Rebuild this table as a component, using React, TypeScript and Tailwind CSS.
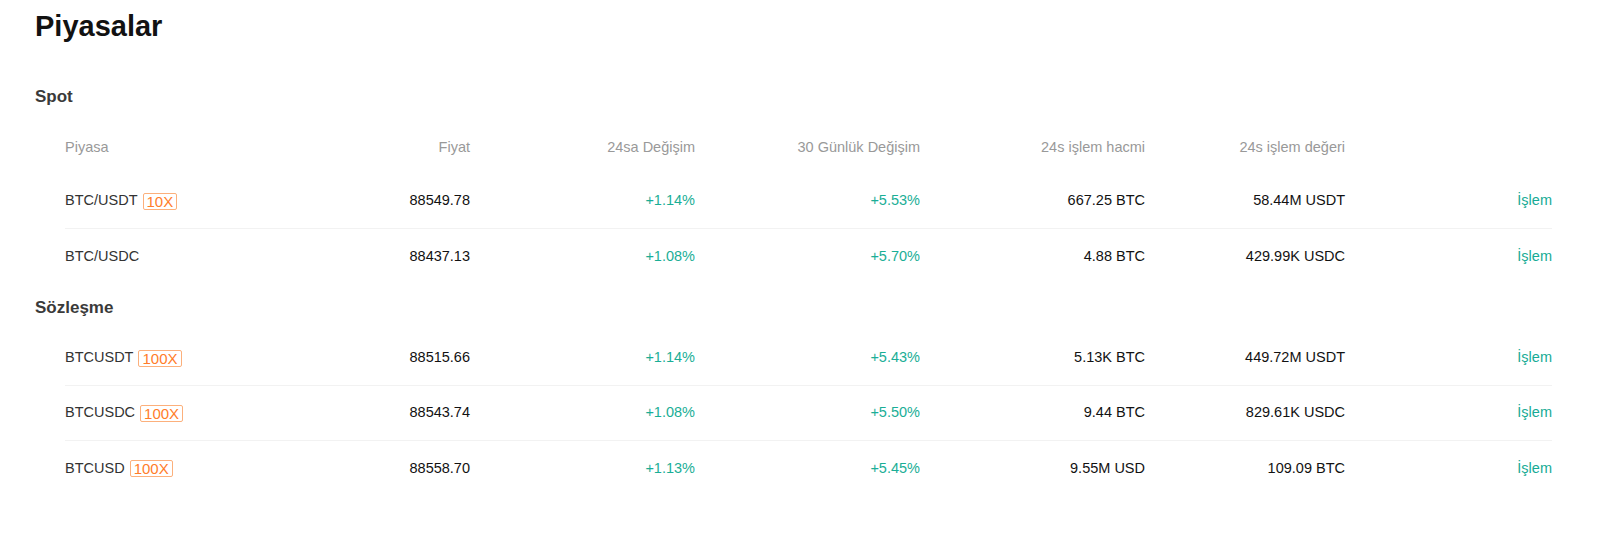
type Row = {
  name: string;
  badge?: string;
  price: string;
  change24: string;
  change30: string;
  volume: string;
  value: string;
};

const spot: Row[] = [
  { name: "BTC/USDT", badge: "10X", price: "88549.78", change24: "+1.14%", change30: "+5.53%", volume: "667.25 BTC", value: "58.44M USDT" },
  { name: "BTC/USDC", price: "88437.13", change24: "+1.08%", change30: "+5.70%", volume: "4.88 BTC", value: "429.99K USDC" },
];

const contracts: Row[] = [
  { name: "BTCUSDT", badge: "100X", price: "88515.66", change24: "+1.14%", change30: "+5.43%", volume: "5.13K BTC", value: "449.72M USDT" },
  { name: "BTCUSDC", badge: "100X", price: "88543.74", change24: "+1.08%", change30: "+5.50%", volume: "9.44 BTC", value: "829.61K USDC" },
  { name: "BTCUSD", badge: "100X", price: "88558.70", change24: "+1.13%", change30: "+5.45%", volume: "9.55M USD", value: "109.09 BTC" },
];

const cols = "grid grid-cols-[200px_205px_225px_225px_225px_200px_1fr] items-center";

function MarketRows({ rows }: { rows: Row[] }) {
  return (
    <div className="ml-[30px] mr-[48px]">
      {rows.map((r, i) => (
        <div
          key={r.name}
          className={`${cols} h-[55px] text-[14.5px] ${i < rows.length - 1 ? "border-b border-[#f2f2f2]" : ""}`}
        >
          <div className="flex items-center text-[#333]">
            {r.name}
            {r.badge && (
              <span className="ml-[5px] flex h-[17px] items-center rounded-[2px] border border-[#fcb07c] px-[3px] text-[15px] leading-none text-[#ff7d2a]">
                {r.badge}
              </span>
            )}
          </div>
          <div className="text-right text-[#121212]">{r.price}</div>
          <div className="text-right text-[#1aae96]">{r.change24}</div>
          <div className="text-right text-[#1aae96]">{r.change30}</div>
          <div className="text-right text-[#121212]">{r.volume}</div>
          <div className="text-right text-[#121212]">{r.value}</div>
          <div className="text-right text-[#17ab95]">İşlem</div>
        </div>
      ))}
    </div>
  );
}

export default function App() {
  return (
    <div className="h-[552px] w-[1600px] bg-white pl-[35px] font-['Liberation_Sans',Arial,sans-serif]">
      <h1 className="flex h-[54px] items-center text-[29px] font-bold text-[#121212]">Piyasalar</h1>

      <h2 className="mt-[19px] flex h-[48px] items-center text-[17px] font-bold text-[#3a3a3a]">Spot</h2>
      <div className={`${cols} ml-[30px] mr-[48px] h-[53px] text-[14.5px] text-[#999]`}>
        <div>Piyasa</div>
        <div className="text-right">Fiyat</div>
        <div className="text-right">24sa Değişim</div>
        <div className="text-right">30 Günlük Değişim</div>
        <div className="text-right">24s işlem hacmi</div>
        <div className="text-right">24s işlem değeri</div>
        <div />
      </div>
      <MarketRows rows={spot} />

      <h2 className="flex h-[47px] items-center text-[17px] font-bold text-[#3a3a3a]">Sözleşme</h2>
      <MarketRows rows={contracts} />
    </div>
  );
}
